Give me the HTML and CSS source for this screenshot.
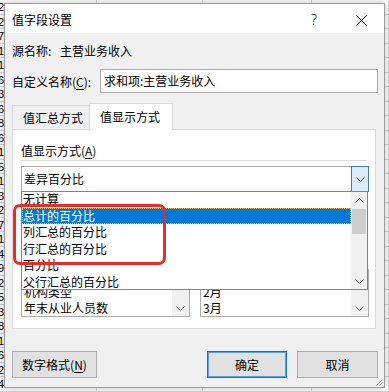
FILE: index.html
```html
<!DOCTYPE html>
<html lang="zh-CN">
<head>
    <meta charset="UTF-8">
    <title>值字段设置</title>
    <link rel="stylesheet" href="styles.css">
</head>
<body>
    <!-- worksheet behind the dialog -->
    <div class="sheet">
        <div class="sheet-row"><div class="num">2</div><div></div><div></div><div></div></div>
        <div class="sheet-row"><div class="num">2</div><div></div><div></div><div></div></div>
        <div class="sheet-row"><div class="num">7</div><div></div><div></div><div></div></div>
        <div class="sheet-row"><div class="num">1</div><div></div><div></div><div></div></div>
        <div class="sheet-row"><div class="num">1</div><div></div><div></div><div></div></div>
        <div class="sheet-row"><div class="num">6</div><div></div><div></div><div></div></div>
        <div class="sheet-row"><div class="num">3</div><div></div><div></div><div></div></div>
        <div class="sheet-row"><div class="num">6</div><div></div><div></div><div></div></div>
        <div class="sheet-row"><div class="num">8</div><div></div><div></div><div></div></div>
        <div class="sheet-row"><div class="num">6</div><div></div><div></div><div></div></div>
        <div class="sheet-row"><div class="num">1</div><div></div><div></div><div></div></div>
        <div class="sheet-row"><div class="num">5</div><div></div><div></div><div></div></div>
        <div class="sheet-row"><div class="num">1</div><div></div><div></div><div></div></div>
        <div class="sheet-row"><div class="num">3</div><div></div><div></div><div></div></div>
        <div class="sheet-row"><div class="num">2</div><div></div><div></div><div></div></div>
        <div class="sheet-row"><div class="num">7</div><div></div><div></div><div></div></div>
        <div class="sheet-row"><div class="num">1</div><div></div><div></div><div></div></div>
        <div class="sheet-row"><div class="num">4</div><div></div><div></div><div></div></div>
        <div class="sheet-row"><div class="num">9</div><div></div><div></div><div></div></div>
        <div class="sheet-row"><div class="num">2</div><div></div><div></div><div></div></div>
        <div class="sheet-row"><div class="num">5</div><div></div><div></div><div></div></div>
        <div class="sheet-row"><div class="num">3</div><div></div><div></div><div></div></div>
        <div class="sheet-row"><div class="num">8</div><div></div><div></div><div></div></div>
        <div class="sheet-row"><div class="num">1</div><div></div><div></div><div></div></div>
        <div class="sheet-row"><div class="num">6</div><div></div><div></div><div></div></div>
        <div class="sheet-row"><div class="num">2</div><div></div><div></div><div></div></div>
        <div class="sheet-row"><div class="num">4</div><div></div><div></div><div></div></div>
        <div class="sheet-row"><div class="num">7</div><div></div><div></div><div></div></div>
    </div>

    <div class="dialog">
        <div class="titlebar">
            <span class="title">值字段设置</span>
            <span class="help">?</span>
            <span class="close">
                <svg width="11" height="11" viewBox="0 0 11 11"><path d="M0.5 0.5 L10.5 10.5 M10.5 0.5 L0.5 10.5" stroke="#000" stroke-width="1" fill="none"/></svg>
            </span>
        </div>

        <div class="body">
            <div class="src-row">
                <span class="src-label">源名称:</span>
                <span>主营业务收入</span>
            </div>
            <div class="name-row">
                <label class="name-label">自定义名称(<u>C</u>):</label>
                <div class="input">求和项:主营业务收入</div>
            </div>

            <div class="tabs">
                <div class="tab">值汇总方式</div>
                <div class="tab active">值显示方式</div>
            </div>
            <div class="panel">
                <div class="panel-label">值显示方式(<u>A</u>)</div>
                <div class="sep"></div>
                <div class="select">
                    <span class="select-text">差异百分比</span>
                    <span class="select-btn">
                        <svg width="9" height="5" viewBox="0 0 9 5"><path d="M0.5 0.5 L4.5 4.5 L8.5 0.5" stroke="#404040" fill="none"/></svg>
                    </span>
                    <div class="droplist">
                        <div class="items">
                            <div class="item">无计算</div>
                            <div class="item sel">总计的百分比</div>
                            <div class="item">列汇总的百分比</div>
                            <div class="item">行汇总的百分比</div>
                            <div class="item">百分比</div>
                            <div class="item">父行汇总的百分比</div>
                        </div>
                        <div class="vscroll">
                            <div class="arrow">
                                <svg width="9" height="5" viewBox="0 0 9 5"><path d="M0.5 4.5 L4.5 0.5 L8.5 4.5" stroke="#606060" fill="none"/></svg>
                            </div>
                            <div class="thumb"></div>
                            <div class="arrow down">
                                <svg width="9" height="5" viewBox="0 0 9 5"><path d="M0.5 0.5 L4.5 4.5 L8.5 0.5" stroke="#606060" fill="none"/></svg>
                            </div>
                        </div>
                    </div>
                </div>

                <div class="boxes">
                    <div class="box">
                        <div class="lines">
                            <div class="line">机构类型</div>
                            <div class="line">年末从业人员数</div>
                        </div>
                        <div class="strip">
                            <div class="arrow">
                                <svg width="9" height="5" viewBox="0 0 9 5"><path d="M0.5 0.5 L4.5 4.5 L8.5 0.5" stroke="#606060" fill="none"/></svg>
                            </div>
                        </div>
                    </div>
                    <div class="box">
                        <div class="lines">
                            <div class="line">2月</div>
                            <div class="line">3月</div>
                        </div>
                        <div class="strip">
                            <div class="arrow">
                                <svg width="9" height="5" viewBox="0 0 9 5"><path d="M0.5 0.5 L4.5 4.5 L8.5 0.5" stroke="#606060" fill="none"/></svg>
                            </div>
                        </div>
                    </div>
                </div>
            </div>

            <div class="buttons">
                <button class="btn btn-format">数字格式(<u>N</u>)</button>
                <button class="btn btn-ok">确定</button>
                <button class="btn btn-cancel">取消</button>
            </div>
        </div>

        <svg class="grip" width="8" height="8" viewBox="0 0 8 8">
            <path d="M7.5 1.5 L1.5 7.5 M7.5 4.5 L4.5 7.5" stroke="#9a9a9a" fill="none"/>
        </svg>
    </div>

    <!-- red annotation frame -->
    <div class="mark"></div>
</body>
</html>
```

FILE: styles.css
```css
* {
    box-sizing: border-box;
}

body {
    margin: 0;
    width: 389px;
    height: 392px;
    overflow: hidden;
    position: relative;
    background-color: #fff;
    font-family: "Noto Sans CJK SC", "Noto Sans", sans-serif;
    font-size: 12px;
    color: #000;
}

u {
    text-decoration: underline;
    text-underline-offset: 2px;
}

/* worksheet */
.sheet-row {
    display: grid;
    grid-template-columns: 97px 106px 109px 1fr;
    height: 14.5px;
}

.sheet-row div {
    border-right: 1px solid #d4d4d4;
    border-bottom: 1px solid #d4d4d4;
    font-family: "Liberation Sans", sans-serif;
    font-size: 11px;
    line-height: 14px;
    overflow: hidden;
}

.sheet-row .num {
    text-indent: -2px;
}

/* dialog window */
.dialog {
    position: absolute;
    left: 4px;
    top: 3px;
    width: 381px;
    height: 385px;
    border: 1px solid #9c9c9c;
    background-color: #f0f0f0;
    box-shadow: 0 0 8px rgba(0, 0, 0, 0.25);
    display: flex;
    flex-direction: column;
}

.titlebar {
    height: 29px;
    flex-shrink: 0;
    background-color: #fff;
    display: flex;
    align-items: center;
    padding: 3px 9px 0 7px;
}

.title {
    line-height: 16px;
}

.help {
    margin-left: auto;
    width: 14px;
    text-align: center;
    font-family: "Noto Sans", sans-serif;
    font-size: 14px;
    font-weight: 300;
    line-height: 16px;
    color: #222;
}

.close {
    margin-left: 26px;
    width: 28px;
    height: 16px;
    display: flex;
    align-items: center;
    justify-content: center;
}

.body {
    flex: 1;
    padding-left: 7px;
}

.src-row {
    margin-top: 9px;
    height: 18px;
    line-height: 18px;
    display: flex;
}

.src-label {
    width: 48px;
}

.name-row {
    margin-top: 9px;
    height: 24px;
    display: flex;
    align-items: center;
}

.name-label {
    width: 88px;
}

.input {
    width: 278px;
    height: 24px;
    border: 1px solid #adadad;
    background-color: #fff;
    padding-left: 3px;
    line-height: 22px;
}

/* tabs */
.tabs {
    margin-top: 10px;
    height: 26px;
    display: flex;
    align-items: flex-end;
    position: relative;
    z-index: 1;
}

.tab {
    width: 77px;
    height: 24px;
    border: 1px solid #d9d9d9;
    border-bottom: none;
    border-right: none;
    padding-left: 10px;
    line-height: 23px;
    background-color: #f0f0f0;
}

.tab.active {
    width: 84px;
    height: 27px;
    margin-bottom: -1px;
    border-right: 1px solid #d9d9d9;
    background-color: #fff;
    line-height: 26px;
}

.panel {
    width: 364px;
    height: 200px;
    border: 1px solid #d9d9d9;
    background-color: #fff;
    padding: 0 6px 0 8px;
}

.panel-label {
    margin-top: 12px;
    height: 18px;
    line-height: 18px;
}

.sep {
    height: 1px;
    width: 347px;
    margin-left: -1px;
    background-color: #dcdcdc;
}

/* combo box */
.select {
    position: relative;
    margin-top: 5px;
    height: 26px;
    border: 1px solid #adadad;
    background-color: #fff;
    display: flex;
}

.select-text {
    padding-left: 2px;
    line-height: 24px;
}

.select-btn {
    margin: -1px -1px -1px auto;
    width: 18px;
    height: 26px;
    border: 1px solid #3c7fb1;
    background-color: #dcecfc;
    display: flex;
    align-items: center;
    justify-content: center;
}

.droplist {
    position: absolute;
    left: -1px;
    top: 24px;
    width: 347px;
    height: 99px;
    border: 1px solid #828282;
    background-color: #fff;
    display: flex;
    overflow: hidden;
    z-index: 2;
}

.items {
    flex: 1;
    margin-top: -1px;
}

.item {
    height: 16.5px;
    line-height: 16.5px;
    padding-left: 1px;
    white-space: nowrap;
}

.item.sel {
    background-color: #0078d7;
    color: #fff;
    outline: 1px dotted #ffc36b;
    outline-offset: -1px;
}

.vscroll {
    width: 16px;
    background-color: #f0f0f0;
    display: flex;
    flex-direction: column;
}

.arrow {
    height: 16px;
    flex-shrink: 0;
    display: flex;
    align-items: center;
    justify-content: center;
}

.arrow.down {
    margin-top: auto;
}

.thumb {
    margin: 1px 1px 0;
    height: 25px;
    background-color: #cdcdcd;
}

/* list boxes partly hidden by the drop list */
.boxes {
    margin-top: 77px;
    display: flex;
    gap: 10px;
}

.box {
    width: 169px;
    height: 48px;
    border: 1px solid #adadad;
    background-color: #fff;
    display: flex;
    overflow: hidden;
}

.lines {
    flex: 1;
    display: flex;
    flex-direction: column;
    justify-content: flex-end;
    overflow: hidden;
    padding-left: 2px;
}

.line {
    flex-shrink: 0;
    height: 16px;
    line-height: 16px;
}

.strip {
    width: 17px;
    background-color: #f0f0f0;
    display: flex;
    flex-direction: column;
    justify-content: flex-end;
}

/* buttons */
.buttons {
    margin-top: 22px;
    padding-right: 6px;
    display: flex;
}

.btn {
    height: 27px;
    border: 1px solid #adadad;
    background-color: #e1e1e1;
    font-family: inherit;
    font-size: 12px;
    color: #000;
    padding: 0;
    line-height: 25px;
}

.btn-format {
    width: 85px;
}

.btn-ok {
    width: 80px;
    margin-left: auto;
    border-color: #0078d7;
    box-shadow: inset 0 0 0 1px #5aa2e6;
}

.btn-cancel {
    width: 81px;
    margin-left: 10px;
}

.grip {
    position: absolute;
    right: 1px;
    bottom: 1px;
}

/* annotation */
.mark {
    position: absolute;
    left: 13px;
    top: 204px;
    width: 153px;
    height: 61px;
    border: 3px solid #ec2a2a;
    border-radius: 7px;
    z-index: 5;
}
```
